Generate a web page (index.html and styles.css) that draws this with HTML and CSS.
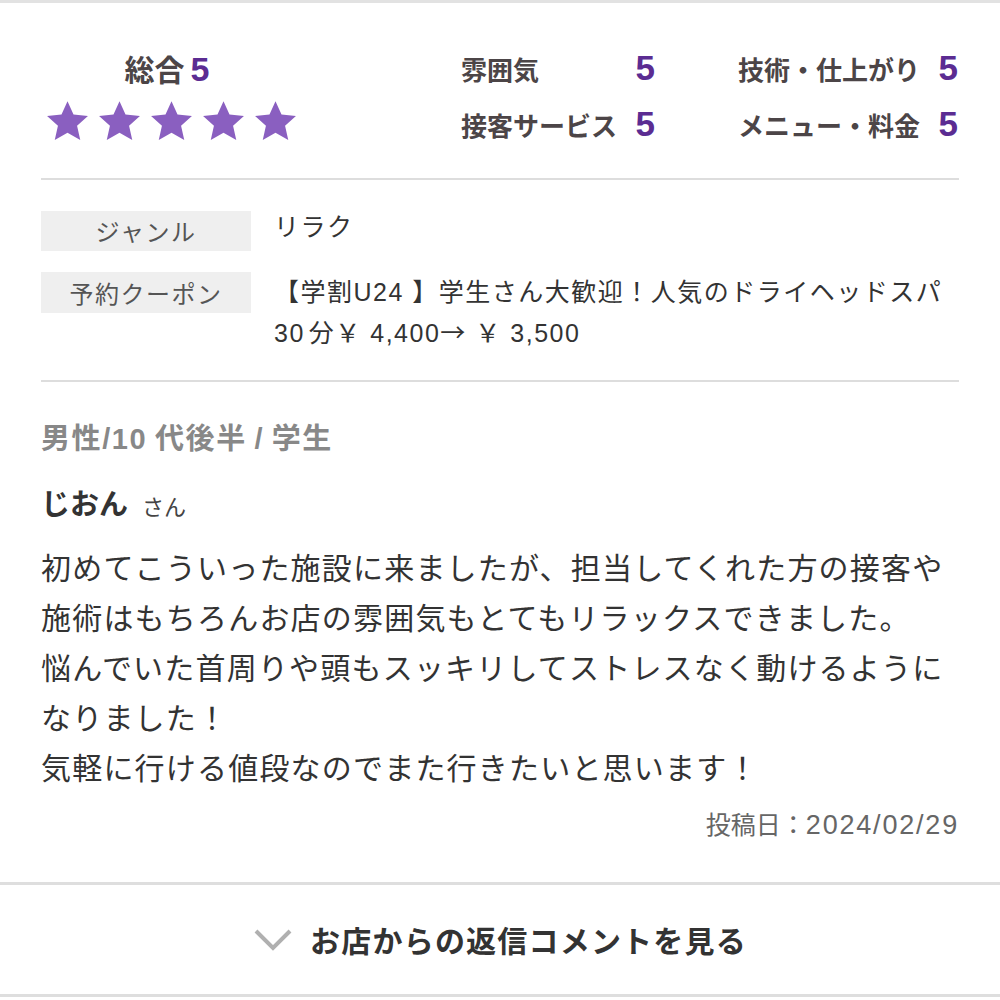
FILE: index.html
```html
<!DOCTYPE html>
<html lang="ja">
<head>
<meta charset="utf-8">
<title>口コミ</title>
<link rel="stylesheet" href="styles.css">
</head>
<body>
<div class="edge"></div>
<div class="review">
  <section class="summary">
    <div class="overall">
      <div class="overall-title">総合<span class="num">5</span></div>
      <div class="stars">
        <svg class="star" viewBox="0 0 24 24"><path d="M12 1.2l3.2 7.1 7.7.8-5.8 5.2 1.7 7.6L12 18l-6.8 3.9 1.7-7.6-5.8-5.2 7.7-.8z"/></svg>
        <svg class="star" viewBox="0 0 24 24"><path d="M12 1.2l3.2 7.1 7.7.8-5.8 5.2 1.7 7.6L12 18l-6.8 3.9 1.7-7.6-5.8-5.2 7.7-.8z"/></svg>
        <svg class="star" viewBox="0 0 24 24"><path d="M12 1.2l3.2 7.1 7.7.8-5.8 5.2 1.7 7.6L12 18l-6.8 3.9 1.7-7.6-5.8-5.2 7.7-.8z"/></svg>
        <svg class="star" viewBox="0 0 24 24"><path d="M12 1.2l3.2 7.1 7.7.8-5.8 5.2 1.7 7.6L12 18l-6.8 3.9 1.7-7.6-5.8-5.2 7.7-.8z"/></svg>
        <svg class="star" viewBox="0 0 24 24"><path d="M12 1.2l3.2 7.1 7.7.8-5.8 5.2 1.7 7.6L12 18l-6.8 3.9 1.7-7.6-5.8-5.2 7.7-.8z"/></svg>
      </div>
    </div>
    <div class="sub-ratings">
      <div class="sub c1"><span class="sub-label">雰囲気</span><span class="sub-num">5</span></div>
      <div class="sub c2"><span class="sub-label">技術・仕上がり</span><span class="sub-num">5</span></div>
      <div class="sub c1"><span class="sub-label">接客サービス</span><span class="sub-num">5</span></div>
      <div class="sub c2"><span class="sub-label">メニュー・料金</span><span class="sub-num">5</span></div>
    </div>
  </section>
  <div class="rule"></div>
  <section class="info">
    <div class="info-label">ジャンル</div>
    <div class="info-value first">リラク</div>
    <div class="info-label tall">予約クーポン</div>
    <div class="info-value">【学割U24 】学生さん大歓迎！人気のドライヘッドスパ<br>30<span class="gap">分</span>￥ 4,400<span class="cjk">→</span>￥ 3,500</div>
  </section>
  <div class="rule"></div>
  <section class="comment">
    <div class="profile">男性/10 代後半 / 学生</div>
    <div class="name">じおん<span class="san">さん</span></div>
    <p class="body">初めてこういった施設に来ましたが、担当してくれた方の接客や<br>施術はもちろんお店の雰囲気もとてもリラックスできました。<br>悩んでいた首周りや頭もスッキリしてストレスなく動けるように<br>なりました！<br>気軽に行ける値段なのでまた行きたいと思います！</p>
    <div class="date">投稿日：<span class="date-num">2024/02/29</span></div>
  </section>
</div>
<div class="footer">
  <svg class="chevron" viewBox="0 0 40 24"><polyline points="3,3 20,20 37,3"/></svg>
  <span class="footer-text">お店からの返信コメントを見る</span>
</div>
```
FILE: styles.css
```css
html, body {
  margin: 0;
  padding: 0;
  background: #ffffff;
}
body {
  font-family: "Noto Sans CJK JP", "Noto Sans", sans-serif;
  color: #333333;
  width: 1000px;
  height: 1000px;
  overflow: hidden;
}
.edge {
  height: 3px;
  background: #e2e2e2;
}
.review {
  padding: 0 41px;
}
.summary {
  display: flex;
  align-items: flex-start;
  height: 175px;
  box-sizing: border-box;
  padding-top: 41px;
}
.overall {
  width: 260px;
  display: flex;
  flex-direction: column;
  align-items: center;
  padding-top: 4px;
}
.overall-title {
  font-size: 30px;
  font-weight: 700;
  line-height: 40px;
  color: #4c4547;
  padding-right: 8px;
}
.overall-title .num {
  font-family: "Liberation Sans", sans-serif;
  font-size: 34px;
  color: #5b2c92;
  margin-left: 6px;
}
.stars {
  display: flex;
  gap: 7px;
  margin-top: 10px;
}
.star {
  width: 45px;
  height: 45px;
  fill: #8a5fc0;
}
.sub-ratings {
  margin-left: 160px;
  margin-top: 2px;
  display: grid;
  grid-template-columns: 194px 220px;
  column-gap: 83px;
  row-gap: 12px;
}
.sub {
  display: flex;
  justify-content: space-between;
  align-items: center;
  height: 44px;
}
.sub-label {
  font-size: 26px;
  font-weight: 700;
  color: #4c4547;
}
.sub-num {
  font-family: "Liberation Sans", sans-serif;
  font-size: 35px;
  font-weight: 700;
  color: #5b2c92;
}
.rule {
  height: 2px;
  background: #dddddd;
}
.info {
  display: grid;
  grid-template-columns: 210px 1fr;
  column-gap: 23px;
  row-gap: 21px;
  padding: 31px 0 26px;
}
.info-label {
  background: #efefef;
  height: 40px;
  line-height: 40px;
  text-align: center;
  font-size: 24px;
  letter-spacing: 1.5px;
  color: #555555;
}
.info-label.tall {
  height: 41px;
  line-height: 41px;
}
.info-value {
  font-family: "Liberation Sans", "Noto Sans CJK JP", sans-serif;
  font-size: 25px;
  line-height: 41px;
  letter-spacing: 1.5px;
  color: #333333;
  white-space: nowrap;
}
.info-value .gap {
  margin-left: 4px;
}
.info-value .cjk {
  font-family: "Noto Sans CJK JP", sans-serif;
  line-height: 1;
  letter-spacing: 0;
  margin-right: 10px;
}
.info-value.first {
  line-height: 32px;
}
.comment {
  padding-top: 37px;
}
.profile {
  font-family: "Liberation Sans", "Noto Sans CJK JP", sans-serif;
  font-size: 29px;
  font-weight: 700;
  line-height: 40px;
  letter-spacing: 1.6px;
  word-spacing: -2px;
  color: #888888;
}
.name {
  margin-top: 23px;
  font-size: 29px;
  font-weight: 700;
  line-height: 40px;
  color: #333333;
}
.san {
  font-size: 22px;
  font-weight: 400;
  color: #444444;
  margin-left: 14px;
}
.body {
  margin: 16px 0 0;
  font-size: 30px;
  line-height: 50px;
  letter-spacing: 1.2px;
  color: #333333;
  white-space: nowrap;
}
.date {
  margin-top: 14px;
  text-align: right;
  font-size: 25px;
  line-height: 36px;
  color: #666666;
}
.date-num {
  font-family: "Liberation Sans", sans-serif;
  font-size: 27px;
  line-height: 1;
  letter-spacing: 1.8px;
}
.footer {
  margin-top: 41px;
  border-top: 3px solid #dedede;
  border-bottom: 3px solid #dedede;
  height: 109px;
  display: flex;
  align-items: center;
  justify-content: center;
  gap: 17px;
}
.chevron {
  width: 40px;
  height: 24px;
  fill: none;
  stroke: #b0b0b0;
  stroke-width: 4;
}
.footer-text {
  font-size: 30px;
  font-weight: 700;
  letter-spacing: 1.2px;
  color: #333333;
  position: relative;
  top: -1px;
}
```
